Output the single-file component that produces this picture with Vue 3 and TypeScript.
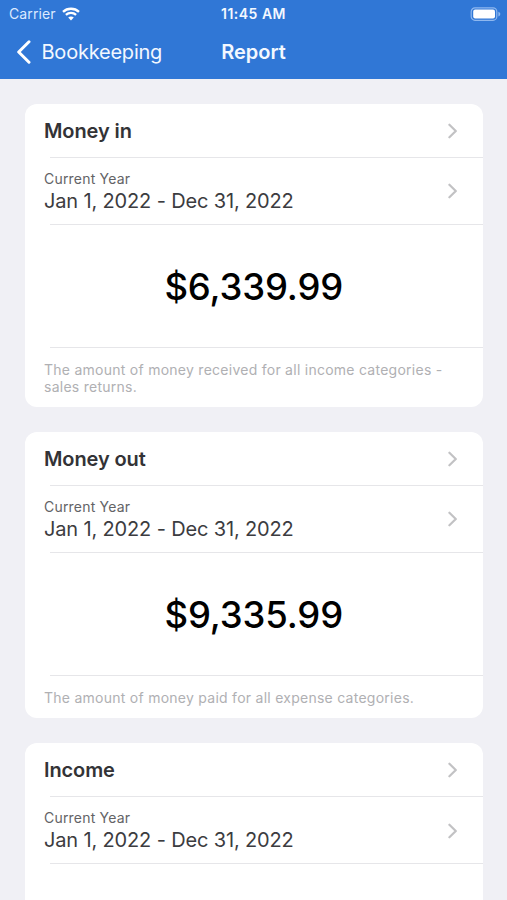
<script setup lang="ts">
interface Report {
  title: string
  period: string
  range: string
  amount: string
  note: string
}

const reports: Report[] = [
  {
    title: 'Money in',
    period: 'Current Year',
    range: 'Jan 1, 2022 - Dec 31, 2022',
    amount: '$6,339.99',
    note: 'The amount of money received for all income categories - sales returns.',
  },
  {
    title: 'Money out',
    period: 'Current Year',
    range: 'Jan 1, 2022 - Dec 31, 2022',
    amount: '$9,335.99',
    note: 'The amount of money paid for all expense categories.',
  },
  {
    title: 'Income',
    period: 'Current Year',
    range: 'Jan 1, 2022 - Dec 31, 2022',
    amount: '',
    note: '',
  },
]
</script>

<template>
  <div class="screen">
    <header class="header">
      <div class="status">
        <div class="carrier">
          <span>Carrier</span>
          <svg class="wifi" viewBox="0 0 18 14" width="18" height="14">
            <path d="M1 4.9 C5.4 0.7 12.6 0.7 17 4.9" />
            <path d="M3.9 7.9 C6.8 5.2 11.2 5.2 14.1 7.9" />
            <path class="dot" d="M9 13.4 L6.2 10.5 C7.8 9.1 10.2 9.1 11.8 10.5 Z" />
          </svg>
        </div>
        <span class="time">11:45 AM</span>
        <svg class="battery" viewBox="0 0 32 14" width="32" height="14">
          <rect class="shell" x="1.2" y="0.9" width="25.6" height="12.4" rx="3.8" />
          <rect class="charge" x="3.2" y="2.6" width="21.8" height="9" rx="2" />
          <path class="tip" d="M28.4 4.8 C30.9 5.7 30.9 8.5 28.4 9.4 Z" />
        </svg>
      </div>
      <nav class="nav">
        <button class="back" type="button">
          <svg viewBox="0 0 15 24" width="15" height="24">
            <path d="M13 1.8 L2.7 12 L13 22.2" />
          </svg>
          <span>Bookkeeping</span>
        </button>
        <h1>Report</h1>
        <span></span>
      </nav>
    </header>

    <main class="list">
      <section v-for="report in reports" :key="report.title" class="card">
        <div class="row title-row">
          <h2>{{ report.title }}</h2>
          <svg class="chevron" viewBox="0 0 10 16" width="10" height="16">
            <path d="M1.4 1.7 L7.8 8 L1.4 14.3" />
          </svg>
        </div>
        <div class="row period-row">
          <div>
            <div class="period">{{ report.period }}</div>
            <div class="range">{{ report.range }}</div>
          </div>
          <svg class="chevron" viewBox="0 0 10 16" width="10" height="16">
            <path d="M1.4 1.7 L7.8 8 L1.4 14.3" />
          </svg>
        </div>
        <div class="amount">{{ report.amount }}</div>
        <p v-if="report.note" class="note">{{ report.note }}</p>
      </section>
    </main>
  </div>
</template>

<style>
body {
  background: #f0f0f5;
  overflow: hidden;
}
</style>

<style scoped>
.screen {
  box-sizing: border-box;
  height: 900px;
  overflow: hidden;
  background: #f0f0f5;
  font-family: Inter, "Liberation Sans", sans-serif;
  color: #333336;
}
.header {
  height: 79px;
  background: #3077d6;
  color: #f3f8ff;
}
.status {
  display: grid;
  grid-template-columns: 1fr auto 1fr;
  align-items: center;
  height: 27px;
  padding: 0 5px 0 9px;
  font-size: 14px;
  line-height: 26px;
}
.carrier {
  display: flex;
  align-items: center;
  gap: 6px;
  letter-spacing: 0.1px;
  color: #dceaff;
}
.wifi {
  fill: none;
  stroke: #fff;
  stroke-width: 2.3;
}
.wifi .dot {
  fill: #fff;
  stroke: none;
}
.time {
  margin-right: 4px;
  font-weight: 600;
  font-size: 14px;
  letter-spacing: 0.5px;
}
.battery {
  justify-self: end;
}
.shell {
  fill: none;
  stroke: #8fb8ef;
  stroke-width: 1.2;
}
.charge {
  fill: #fff;
}
.tip {
  fill: #8fb8ef;
}
.nav {
  display: grid;
  grid-template-columns: 1fr auto 1fr;
  align-items: center;
  height: 50px;
  padding: 0 16px;
}
.back {
  display: flex;
  align-items: center;
  gap: 10.5px;
  padding: 0;
  border: 0;
  background: none;
  color: inherit;
  font: inherit;
  font-size: 20px;
  letter-spacing: -0.22px;
}
.back path {
  fill: none;
  stroke: #fff;
  stroke-width: 3;
  stroke-linecap: round;
  stroke-linejoin: round;
}
h1 {
  margin: 0;
  font-size: 20px;
  font-weight: 600;
}
.list {
  display: flex;
  flex-direction: column;
  gap: 24.7px;
  padding: 24.6px 24.5px 0 25px;
}
.card {
  flex: none;
  border-radius: 12px;
  background: #fff;
  overflow: hidden;
}
.row {
  display: flex;
  align-items: center;
  justify-content: space-between;
  box-sizing: border-box;
  padding: 0 25px 0 19px;
  background: linear-gradient(#e6e6e9, #e6e6e9) 25px 100% / 100% 1.2px no-repeat;
}
.title-row {
  height: 54.4px;
}
.period-row {
  height: 67px;
  padding-top: 1px;
}
.period-row .chevron {
  margin-bottom: 1.2px;
}
h2 {
  margin: 0;
  font-size: 20px;
  font-weight: 600;
  line-height: 26px;
  letter-spacing: -0.1px;
}
.chevron {
  fill: none;
  stroke: #c2c2c4;
  stroke-width: 2.2;
  stroke-linecap: round;
  stroke-linejoin: round;
}
.period {
  font-size: 14px;
  line-height: 17px;
  letter-spacing: 0.2px;
  color: #636366;
}
.range {
  margin-top: 0.8px;
  font-size: 20px;
  line-height: 26px;
  letter-spacing: -0.15px;
  color: #3c3c3f;
}
.amount {
  box-sizing: border-box;
  height: 123px;
  background: linear-gradient(#e6e6e9, #e6e6e9) 25px 100% / 100% 1.2px no-repeat;
  color: #000;
  font-size: 36.5px;
  font-weight: 500;
  line-height: 125px;
  letter-spacing: -0.15px;
  text-align: center;
}
.note {
  margin: 0;
  padding: 12.6px 24px 12.4px 19px;
  color: #b0b0b3;
  font-size: 14px;
  line-height: 17px;
  letter-spacing: 0.26px;
}
</style>
